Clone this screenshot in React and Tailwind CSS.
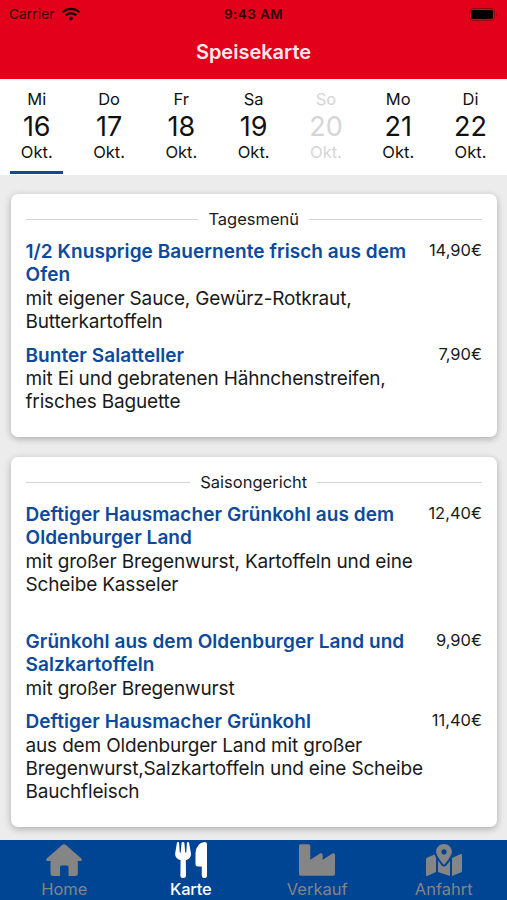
import React from "react";
import { FaIndustry, FaMapMarkedAlt, FaWifi } from "react-icons/fa";

const days = [
  ["Mi", "16"], ["Do", "17"], ["Fr", "18"], ["Sa", "19"], ["So", "20"], ["Mo", "21"], ["Di", "22"],
];

const tagesmenu = [
  { title: ["1/2 Knusprige Bauernente frisch aus dem", "Ofen"], text: ["mit eigener Sauce, Gewürz-Rotkraut,", "Butterkartoffeln"], price: "14,90€" },
  { title: ["Bunter Salatteller"], text: ["mit Ei und gebratenen Hähnchenstreifen,", "frisches Baguette"], price: "7,90€" },
];

const saison = [
  { title: ["Deftiger Hausmacher Grünkohl aus dem", "Oldenburger Land"], text: ["mit großer Bregenwurst, Kartoffeln und eine", "Scheibe Kasseler", "\u00a0"], price: "12,40€" },
  { title: ["Grünkohl aus dem Oldenburger Land und", "Salzkartoffeln"], text: ["mit großer Bregenwurst"], price: "9,90€" },
  { title: ["Deftiger Hausmacher Grünkohl"], text: ["aus dem Oldenburger Land mit großer", "Bregenwurst,Salzkartoffeln und eine Scheibe", "Bauchfleisch"], price: "11,40€" },
];

function Card({ label, items, className }) {
  return (
    <section className={`ml-[10.5px] mr-[10px] rounded-[7px] bg-white px-[15px] pt-[14px] shadow-[0_2px_7px_rgba(0,0,0,0.27)] ${className}`}>
      <div className="flex h-[22px] items-center gap-[10px]">
        <div className="h-px flex-1 bg-[#d4d4d4]" />
        <span className="text-[16.5px] leading-[22px]">{label}</span>
        <div className="h-px flex-1 bg-[#d4d4d4]" />
      </div>
      <div className="mt-[9px] flex flex-col gap-[10px]">
        {items.map((item) => (
          <div key={item.price} className="flex justify-between whitespace-nowrap">
            <div className="-mb-px pt-px text-[19px] leading-[23.4px]">
              {item.title.map((line) => (
                <div key={line} className="font-semibold tracking-[0.06px] text-[#0b4a9c]">{line}</div>
              ))}
              {item.text.map((line) => (
                <div key={line} className="tracking-[-0.16px]">{line}</div>
              ))}
            </div>
            <div className="text-[16.5px] leading-[22px]">{item.price}</div>
          </div>
        ))}
      </div>
    </section>
  );
}

function HomeIcon() {
  return (
    <svg width="36" height="32" viewBox="0 0 36 32" fill="currentColor">
      <path d="M16.4.8Q18-.5 19.6.8L35.3 14.4Q36.8 17 34.6 17H31.8V29.5Q31.8 32 29.3 32H22.5V23Q22.5 21.5 21 21.5H15.5Q14 21.5 14 23V32H7Q4.5 32 4.5 29.5V17H1.4Q-.8 17 .7 14.4Z" />
    </svg>
  );
}

function CutleryIcon() {
  return (
    <svg width="32" height="36" viewBox="0 0 32 36" fill="currentColor">
      <path d="M1.9 1Q2 0 3 0T4.1 1L4.7 10Q4.8 10.7 5.3 10.7T5.8 10L6.6 1Q6.8 0 8 0T9.4 1L10.2 10Q10.3 10.7 10.8 10.7T11.3 10L11.9 1Q12 0 13 0T14.1 1L15.9 11Q16.5 16.5 10.8 18.3L11 33.5Q11 36 8.2 36T5.4 33.5L5.6 18.3Q-.5 16.5.2 11Z" />
      <path d="M29.5 0Q32 0 32 2V33.5Q32 36 29.4 36T26.8 33.5V24.5H23Q20.5 24.5 20.5 22V11Q21.5 1 29.5 0Z" />
    </svg>
  );
}

const tabs = [
  { name: "Home", icon: <HomeIcon /> },
  { name: "Karte", icon: <CutleryIcon />, active: true },
  { name: "Verkauf", icon: <FaIndustry size={36} /> },
  { name: "Anfahrt", icon: <FaMapMarkedAlt size={36} /> },
];

export default function App() {
  return (
    <div className="flex h-[900px] w-[507px] flex-col overflow-hidden bg-[#ececec] font-['Inter',sans-serif] text-[#1a1a1a]">
      <header className="h-[79px] shrink-0 bg-[#e2001a]">
        <div className="grid h-[28px] grid-cols-3 items-center px-[9px] text-[13.5px] text-[#300007]">
          <div className="flex items-center gap-[7px]">
            <span className="tracking-[0.2px]">Carrier</span>
            <FaWifi size={18} color="#160003" />
          </div>
          <div className="text-center font-semibold tracking-[0.4px]">9:43 AM</div>
          <svg className="justify-self-end" width="29" height="13" viewBox="0 0 29 13">
            <rect x=".5" y=".5" width="25" height="12" rx="3.5" fill="none" stroke="#96000f" />
            <rect x="2" y="2" width="22" height="9" rx="2" fill="#000" />
            <path d="M27 4.5q1.5 2 0 4z" fill="#96000f" />
          </svg>
        </div>
        <h1 className="mt-[11px] text-center text-[20px] font-semibold leading-[26px] text-[#ffe9eb]">Speisekarte</h1>
      </header>
      <nav className="flex h-[96px] shrink-0 bg-white pl-[0.6px]">
        {days.map(([day, number], i) => (
          <div
            key={number}
            className={`flex w-[72.3px] shrink-0 flex-col items-center pt-[9px] ${i === 4 ? "text-[#d5d5d5]" : "text-[#111]"}`}
          >
            <span className="text-[16.5px] leading-[22px]">{day}</span>
            <span className="pt-px text-[27px] leading-[32px]">{number}</span>
            <span className="-mt-px text-[16.5px] leading-[20px]">Okt.</span>
            {i === 0 && <div className="mt-[9px] h-[3px] w-[53px] bg-[#0b4a9c]" />}
          </div>
        ))}
      </nav>
      <main className="flex flex-1 flex-col gap-[20px] pt-[19px]">
        <Card label="Tagesmenü" items={tagesmenu} className="h-[243px]" />
        <Card label="Saisongericht" items={saison} className="h-[370px]" />
      </main>
      <footer className="grid h-[60px] shrink-0 grid-cols-4 bg-[#004494] pl-px">
        {tabs.map((tab) => (
          <div key={tab.name} className={`flex flex-col items-center ${tab.active ? "text-white" : "text-[#858585]"}`}>
            <div className="flex h-[40px] items-center">{tab.icon}</div>
            <span className={`text-[16.5px] leading-[18px] ${tab.active ? "font-medium tracking-[-0.2px]" : ""}`}>{tab.name}</span>
          </div>
        ))}
      </footer>
    </div>
  );
}
